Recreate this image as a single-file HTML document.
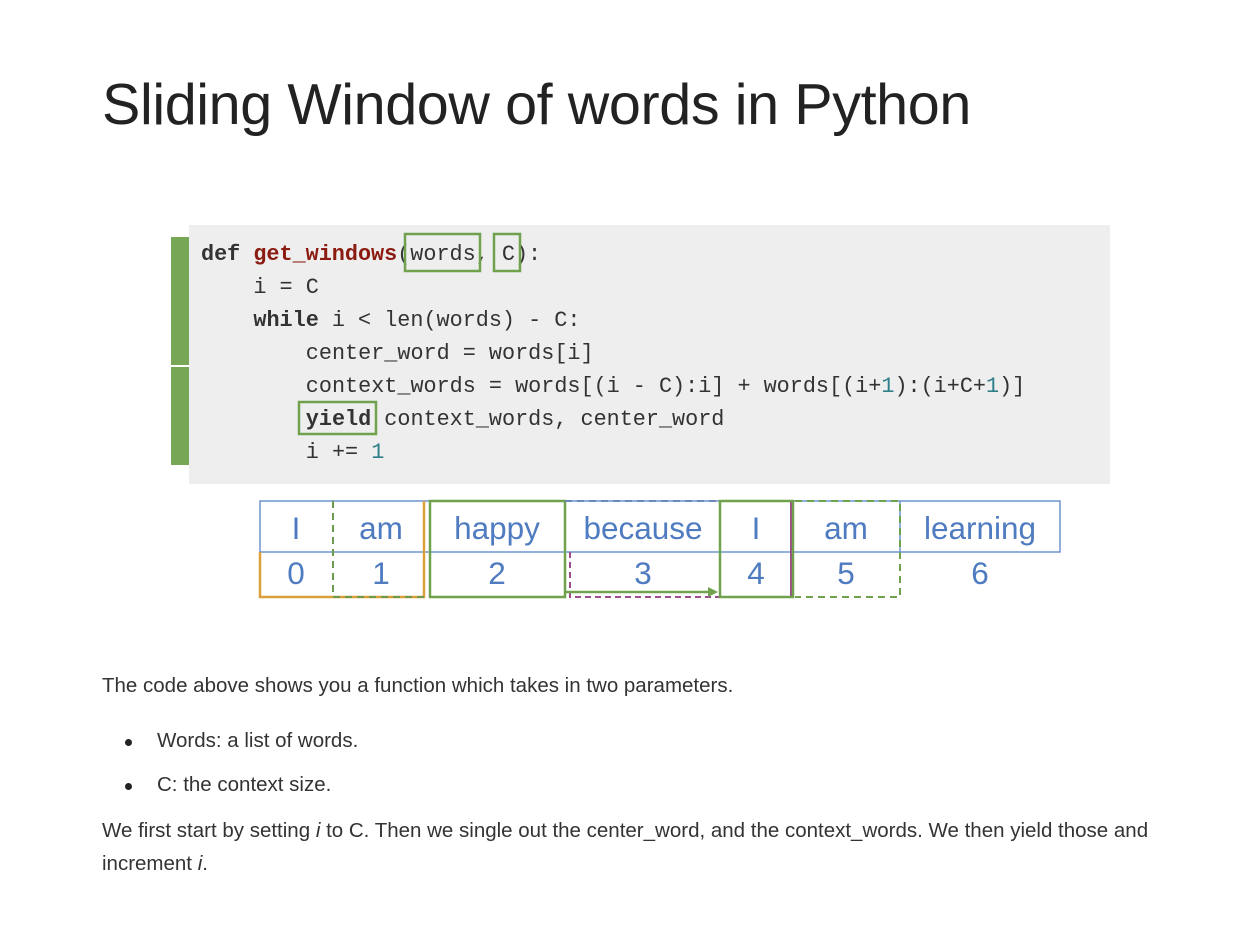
<!DOCTYPE html>
<html><head><meta charset="utf-8"><style>
html,body{margin:0;padding:0;background:#fff;width:1251px;height:941px;overflow:hidden;position:relative;font-family:"Liberation Sans",sans-serif;color:#333}
h1{position:absolute;left:102px;top:72px;margin:0;font-weight:normal;font-size:57.5px;color:#222;letter-spacing:-0.4px;white-space:nowrap}
.t{position:absolute;font-size:20.5px;color:#333;white-space:nowrap;letter-spacing:0}
.dot{position:absolute;width:7px;height:7px;border-radius:50%;background:#222}
</style></head><body>
<h1>Sliding Window of words in Python</h1>
<svg width="1251" height="941" style="position:absolute;left:0;top:0">
<rect x="189" y="225" width="921" height="259" fill="#eeeeee"/>
<rect x="171" y="237" width="18" height="228" fill="#77a657"/>
<rect x="171" y="365" width="18" height="2" fill="#fff"/>
<g font-family="Liberation Mono, monospace" font-size="21.8" fill="#333">
<text x="201" y="260"><tspan font-weight="bold">def </tspan><tspan font-weight="bold" fill="#8b1a10">get_windows</tspan>(words, C):</text>
<text x="253.4" y="293">i = C</text>
<text x="253.4" y="326"><tspan font-weight="bold">while</tspan> i &lt; len(words) - C:</text>
<text x="305.8" y="359">center_word = words[i]</text>
<text x="305.8" y="392">context_words = words[(i - C):i] + words[(i+<tspan fill="#2e7f8a">1</tspan>):(i+C+<tspan fill="#2e7f8a">1</tspan>)]</text>
<text x="305.8" y="425"><tspan font-weight="bold">yield</tspan> context_words, center_word</text>
<text x="305.8" y="458">i += <tspan fill="#2e7f8a">1</tspan></text>
</g>
<g fill="none" stroke="#70a24e" stroke-width="2.5">
<rect x="405" y="234" width="75" height="37"/>
<rect x="494" y="234" width="26" height="37"/>
<rect x="299" y="402" width="77" height="32"/>
</g>
<g fill="none" stroke-width="1.5">
<path d="M260 501H1060V552H260ZM260 552V597" stroke="#6f93cf"/>
<path d="M900 501V552M793 501V552" stroke="#6f93cf"/>
<path d="M260 552V597H424V501" stroke="#d9a03c" stroke-width="2.5"/>
<path d="M333 501V597M333 597H424" stroke="#6a9a4c" stroke-width="2" stroke-dasharray="7,5"/>
<rect x="430" y="501" width="135" height="96" stroke="#70a24e" stroke-width="2.5"/>
<path d="M570 552V597H720" stroke="#9b4c8c" stroke-width="2" stroke-dasharray="6,4"/>
<path d="M565 501H720" stroke="#6a88b8" stroke-width="2" stroke-dasharray="7,5"/>
<path d="M791 501V597" stroke="#9b4c8c" stroke-width="2"/>
<rect x="720" y="501" width="73" height="96" stroke="#70a24e" stroke-width="2.5"/>
<path d="M795 501H900V597H795" stroke="#70a24e" stroke-width="2" stroke-dasharray="7,5"/>
<path d="M565 592H714" stroke="#70a24e" stroke-width="2.5"/>
<path d="M708 587L718 592L708 597Z" fill="#70a24e" stroke="none"/>
</g>
<g font-family="Liberation Sans, sans-serif" font-size="31.5" fill="#4f7bc0" text-anchor="middle">
<text x="296" y="539">I</text><text x="381" y="539">am</text><text x="497" y="539">happy</text>
<text x="643" y="539">because</text><text x="756" y="539">I</text><text x="846" y="539">am</text><text x="980" y="539">learning</text>
<text x="296" y="584">0</text><text x="381" y="584">1</text><text x="497" y="584">2</text>
<text x="643" y="584">3</text><text x="756" y="584">4</text><text x="846" y="584">5</text><text x="980" y="584">6</text>
</g>
</svg>
<div class="t" style="left:102px;top:674px">The code above shows you a function which takes in two parameters.</div>
<div class="dot" style="left:125px;top:739px"></div>
<div class="t" style="left:157px;top:729px">Words: a list of words.</div>
<div class="dot" style="left:125px;top:783px"></div>
<div class="t" style="left:157px;top:773px">C: the context size.</div>
<div class="t" style="left:102px;top:819px">We first start by setting <i>i</i> to C. Then we single out the center_word, and the context_words. We then yield those and</div>
<div class="t" style="left:102px;top:852px">increment <i>i</i>.</div>
</body></html>
